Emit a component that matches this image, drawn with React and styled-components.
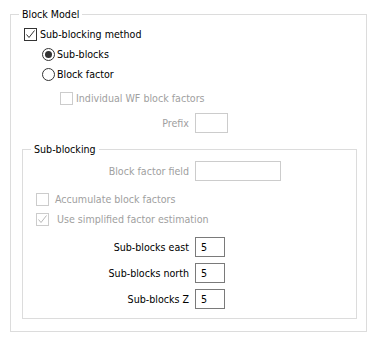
import React from "react";
import styled, { createGlobalStyle } from "styled-components";

const GlobalStyle = createGlobalStyle`
  body {
    margin: 0;
    background: #ffffff;
    font-family: "DejaVu Sans Condensed", "Liberation Sans", Arial, sans-serif;
    font-size: 10.6px;
    color: #000000;
  }
`;

// Group box with a caption sitting on the top border
const Group = styled.div`
  position: relative;
  border: 1px solid #dcdcdc;
  margin: ${(p) => p.$margin};
  height: ${(p) => p.$height}px;
  box-sizing: border-box;
  padding: ${(p) => p.$padding};
  display: flex;
  flex-direction: column;
`;

const Caption = styled.span`
  position: absolute;
  top: -8px;
  left: 8px;
  padding: 0 3px;
  background: #ffffff;
  line-height: 15px;
`;

const Row = styled.label`
  display: flex;
  align-items: center;
  height: 20px;
  padding-left: ${(p) => p.$indent || 0}px;
  margin-top: ${(p) => p.$gap || 0}px;
  color: ${(p) => (p.$disabled ? "#a0a0a0" : "#000000")};
`;

const Box = styled.span`
  width: 13px;
  height: 13px;
  box-sizing: border-box;
  border: 1px solid ${(p) => (p.$disabled ? "#cccccc" : "#333333")};
  background: #ffffff;
  margin-right: ${(p) => p.$space}px;
  display: flex;
  align-items: center;
  justify-content: center;
  flex: none;
`;

const Radio = styled.span`
  width: 13px;
  height: 13px;
  box-sizing: border-box;
  border: 1px solid #333333;
  border-radius: 50%;
  margin-right: 2px;
  display: flex;
  align-items: center;
  justify-content: center;
  flex: none;

  &::after {
    content: "";
    width: 7px;
    height: 7px;
    border-radius: 50%;
    background: ${(p) => (p.$on ? "#333333" : "transparent")};
  }
`;

const Field = styled.div`
  display: grid;
  grid-template-columns: ${(p) => p.$labelWidth}px auto;
  column-gap: 6px;
  align-items: center;
  margin-top: ${(p) => p.$gap || 0}px;
  color: ${(p) => (p.$disabled ? "#a0a0a0" : "#000000")};
`;

const FieldLabel = styled.span`
  text-align: right;
`;

const Input = styled.div`
  width: ${(p) => p.$width}px;
  height: 20px;
  box-sizing: border-box;
  border: 1px solid ${(p) => (p.$disabled ? "#cccccc" : "#7a7a7a")};
  padding: 0 5px;
  line-height: 18px;
  color: #000000;
`;

const Check = ({ disabled }) => (
  <svg width="11" height="11" viewBox="0 0 11 11">
    <path
      d="M1.5 5.5 L4 8.5 L9.5 1.5"
      fill="none"
      stroke={disabled ? "#b8b8b8" : "#333333"}
      strokeWidth="1"
    />
  </svg>
);

const CheckRow = ({ checked, disabled, indent, gap, space = 3, children }) => (
  <Row $indent={indent} $gap={gap} $disabled={disabled}>
    <Box $disabled={disabled} $space={space}>
      {checked && <Check disabled={disabled} />}
    </Box>
    {children}
  </Row>
);

const RadioRow = ({ on, indent, children }) => (
  <Row $indent={indent}>
    <Radio $on={on} />
    {children}
  </Row>
);

export default function App() {
  return (
    <>
      <GlobalStyle />
      <Group $margin="14px 11px 0 10px" $height={318} $padding="9px 10px 0 13px">
        <Caption>Block Model</Caption>
        <CheckRow checked>Sub-blocking method</CheckRow>
        <RadioRow on indent={18}>Sub-blocks</RadioRow>
        <RadioRow indent={18}>Block factor</RadioRow>
        <CheckRow disabled indent={36} gap={4}>
          Individual WF block factors
        </CheckRow>
        <Field $labelWidth={165} $gap={5} $disabled>
          <FieldLabel>Prefix</FieldLabel>
          <Input $width={33} $disabled />
        </Field>
        <Group $margin="16px -1px 0 -2px" $height={170} $padding="11px 0 0 13px">
          <Caption>Sub-blocking</Caption>
          <Field $labelWidth={153} $disabled>
            <FieldLabel>Block factor field</FieldLabel>
            <Input $width={86} $disabled />
          </Field>
          <CheckRow disabled gap={8} space={6}>
            Accumulate block factors
          </CheckRow>
          <CheckRow checked disabled space={8}>
            Use simplified factor estimation
          </CheckRow>
          <Field $labelWidth={153} $gap={8}>
            <FieldLabel>Sub-blocks east</FieldLabel>
            <Input $width={30}>5</Input>
          </Field>
          <Field $labelWidth={153} $gap={6}>
            <FieldLabel>Sub-blocks north</FieldLabel>
            <Input $width={30}>5</Input>
          </Field>
          <Field $labelWidth={153} $gap={6}>
            <FieldLabel>Sub-blocks Z</FieldLabel>
            <Input $width={30}>5</Input>
          </Field>
        </Group>
      </Group>
    </>
  );
}
